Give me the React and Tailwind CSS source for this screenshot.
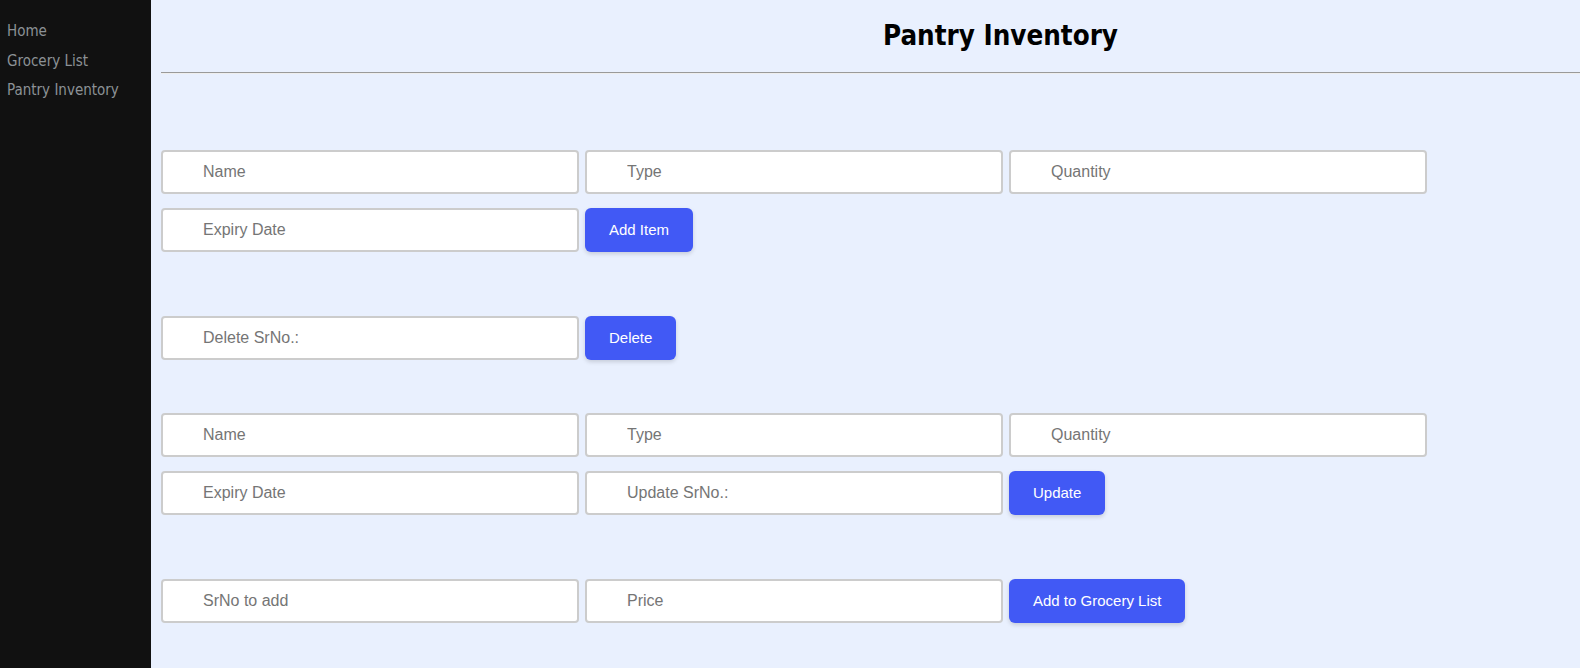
import React from "react";

const inputCls =
  "h-[44px] w-[418px] shrink-0 rounded-[4px] border-2 border-[#cccccc] bg-white pl-[40px] text-[16px] text-black outline-none placeholder:text-[#757575]";
const btnCls =
  "h-[44px] shrink-0 rounded-[6px] bg-[#4159f5] px-[24px] text-[15px] text-white shadow-[0_2px_4px_rgba(0,0,0,0.15)]";

function Field({ placeholder }) {
  return (
    <input
      className={inputCls}
      placeholder={placeholder}
      style={{ fontFamily: '"Liberation Sans", Arial, sans-serif' }}
    />
  );
}

function Btn({ children }) {
  return (
    <button
      className={btnCls}
      style={{ fontFamily: '"Liberation Sans", Arial, sans-serif' }}
    >
      {children}
    </button>
  );
}

export default function App() {
  return (
    <div
      className="flex h-[668px] w-[1580px] overflow-hidden bg-[#e9f0fe]"
      style={{ fontFamily: '"DejaVu Sans Condensed", "DejaVu Sans", sans-serif' }}
    >
      <aside className="flex w-[151px] shrink-0 flex-col bg-[#111111] pl-[7px] pt-[17px] text-[15px] leading-[29.5px] text-[#8c9196]">
        <a>Home</a>
        <a>Grocery List</a>
        <a>Pantry Inventory</a>
      </aside>
      <main className="flex flex-1 flex-col pl-[10px]">
        <h1 className="pl-[722px] pt-[17px] text-[27.5px] font-bold leading-[36px] text-black">
          Pantry Inventory
        </h1>
        <div className="mt-[19px] h-[2px] border-t border-b border-t-[#9a9a9a] border-b-[#eeeeee]"></div>

        <div className="mt-[76px] flex flex-col gap-[14px]">
          <div className="flex gap-[6px]">
            <Field placeholder="Name" />
            <Field placeholder="Type" />
            <Field placeholder="Quantity" />
          </div>
          <div className="flex gap-[6px]">
            <Field placeholder="Expiry Date" />
            <Btn>Add Item</Btn>
          </div>
        </div>

        <div className="mt-[64px] flex gap-[6px]">
          <Field placeholder="Delete SrNo.:" />
          <Btn>Delete</Btn>
        </div>

        <div className="mt-[53px] flex flex-col gap-[14px]">
          <div className="flex gap-[6px]">
            <Field placeholder="Name" />
            <Field placeholder="Type" />
            <Field placeholder="Quantity" />
          </div>
          <div className="flex gap-[6px]">
            <Field placeholder="Expiry Date" />
            <Field placeholder="Update SrNo.:" />
            <Btn>Update</Btn>
          </div>
        </div>

        <div className="mt-[64px] flex gap-[6px]">
          <Field placeholder="SrNo to add" />
          <Field placeholder="Price" />
          <Btn>Add to Grocery List</Btn>
        </div>
      </main>
    </div>
  );
}
